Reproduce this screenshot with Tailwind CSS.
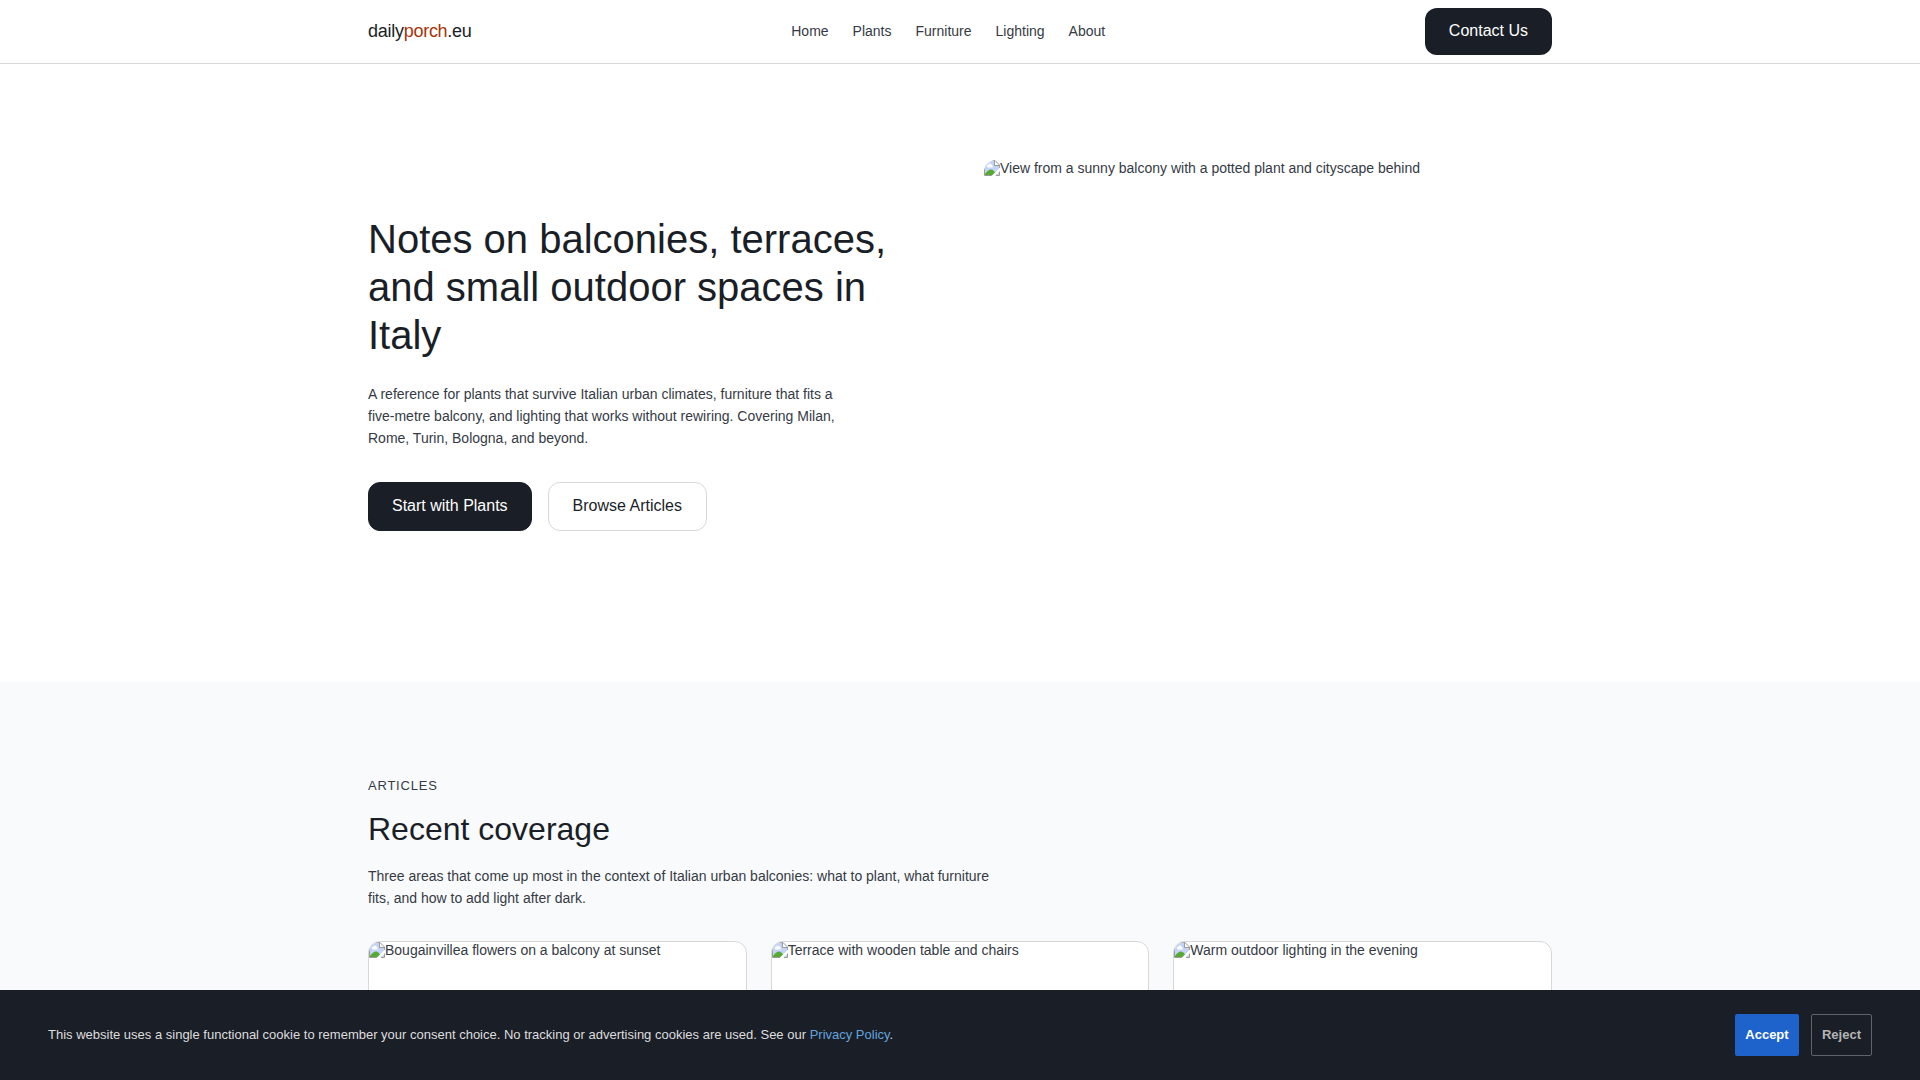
<!DOCTYPE html>
<html lang="en">
<head>
    <meta charset="UTF-8">
    <meta name="viewport" content="width=device-width, initial-scale=1.0">
    <title>dailyporch.eu</title>
    <script src="https://cdn.jsdelivr.net/npm/@tailwindcss/browser@4"></script>
</head>
<body class="bg-white font-['Liberation_Sans',Arial,sans-serif] text-sm text-[#353a45]">
    <!-- Shared placeholder icon for images -->
    <svg class="hidden" aria-hidden="true">
        <symbol id="picture" viewBox="0 0 16 16">
            <path d="M1 1h10l4 4v10H1z" fill="#c3d4f6"/>
            <path d="M3 6.500a1.600 1.600 0 0 1 1.500-2 1.900 1.900 0 0 1 3.500 1 1.200 1.200 0 0 1 .5 2H3.500z" fill="#fff"/>
            <path d="M1 15v-1c2-3 4-4.500 6-4.500 2 0 3 1.500 4 3l2.500 2.500z" fill="#57ab34"/>
            <path d="M11 1v4h4z" fill="#fff"/>
            <path d="M.5 15.500V.5H11l4.500 4.500v10.500zM10.500.5v5h5" fill="none" stroke="#9a9a9a"/>
            <path d="M7.500 16L16 7.500V11l-4.500 5z" fill="#fff"/>
        </symbol>
    </svg>

    <header class="border-b border-[#d8d8da] bg-white">
        <div class="mx-auto flex h-[63px] max-w-7xl items-center justify-between px-12">
            <a href="#" class="text-lg leading-[25px] tracking-[-0.015em] text-[#1a1e27]">daily<span class="text-[#a83208]">porch</span>.eu</a>
            <nav class="flex gap-6 leading-[19px]">
                <a href="#">Home</a>
                <a href="#plants">Plants</a>
                <a href="#furniture">Furniture</a>
                <a href="#lighting">Lighting</a>
                <a href="#about">About</a>
            </nav>
            <a href="#contact" class="rounded-xl bg-[#1a1e27] px-6 pt-3 pb-[13px] text-base leading-[22px] text-white">Contact Us</a>
        </div>
    </header>

    <main>
        <section class="mx-auto grid max-w-7xl grid-cols-2 items-center gap-12 px-12 py-24">
            <div>
                <h1 class="text-[40px] leading-12 text-[#1a1e27]">Notes on balconies, terraces, and small outdoor spaces in Italy</h1>
                <p class="mt-6 max-w-[480px] leading-[22px]">A reference for plants that survive Italian urban climates, furniture that fits a five-metre balcony, and lighting that works without rewiring. Covering Milan, Rome, Turin, Bologna, and beyond.</p>
                <div class="mt-[33px] flex gap-4">
                    <a href="#plants" class="rounded-xl border border-[#1a1e27] bg-[#1a1e27] px-[23px] pt-3 pb-[13px] text-base leading-[22px] text-white">Start with Plants</a>
                    <a href="#articles" class="rounded-xl border border-[#d8d8da] px-6 pt-3 pb-[13px] text-base leading-[22px] text-[#1a1e27]">Browse Articles</a>
                </div>
            </div>
            <div class="flex aspect-[4/3] items-start overflow-hidden rounded-xl leading-4">
                <svg class="size-4 shrink-0"><use href="#picture"/></svg>
                <span>View from a sunny balcony with a potted plant and cityscape behind</span>
            </div>
        </section>

        <section id="articles" class="bg-[#f9fafc]">
            <div class="mx-auto max-w-7xl px-12 py-24">
                <p class="text-[13px] leading-[15px] tracking-[0.06em] uppercase">Articles</p>
                <h2 class="mt-4 text-[32px] leading-10 text-[#1a1e27]">Recent coverage</h2>
                <p class="mt-4 max-w-[640px] leading-[22px]">Three areas that come up most in the context of Italian urban balconies: what to plant, what furniture fits, and how to add light after dark.</p>
                <div class="mt-8 grid grid-cols-3 gap-6">
                    <article id="plants" class="overflow-hidden rounded-xl border border-[#d8d8da] bg-white">
                        <div class="flex aspect-video items-start leading-4">
                            <svg class="size-4 shrink-0"><use href="#picture"/></svg>
                            <span>Bougainvillea flowers on a balcony at sunset</span>
                        </div>
                    </article>
                    <article id="furniture" class="overflow-hidden rounded-xl border border-[#d8d8da] bg-white">
                        <div class="flex aspect-video items-start leading-4">
                            <svg class="size-4 shrink-0"><use href="#picture"/></svg>
                            <span>Terrace with wooden table and chairs</span>
                        </div>
                    </article>
                    <article id="lighting" class="overflow-hidden rounded-xl border border-[#d8d8da] bg-white">
                        <div class="flex aspect-video items-start leading-4">
                            <svg class="size-4 shrink-0"><use href="#picture"/></svg>
                            <span>Warm outdoor lighting in the evening</span>
                        </div>
                    </article>
                </div>
            </div>
        </section>
    </main>

    <!-- Cookie banner -->
    <div id="cookie-banner" class="fixed inset-x-0 bottom-0 flex items-center justify-between gap-6 bg-[#1a1e27] px-12 py-6 text-[13px] text-[#dddddd]">
        <p>This website uses a single functional cookie to remember your consent choice. No tracking or advertising cookies are used. See our <a href="#privacy" class="text-[#63a4de]">Privacy Policy</a>.</p>
        <div class="flex gap-3">
            <button type="button" onclick="closeBanner()" class="h-[42px] min-w-16 rounded-xs bg-[#1e62cc] px-[10px] font-bold text-white">Accept</button>
            <button type="button" onclick="closeBanner()" class="h-[42px] rounded-xs border border-[#5f6269] px-[10px] font-bold text-[#b4b4b4]">Reject</button>
        </div>
    </div>

    <script>
        function closeBanner() {
            document.getElementById('cookie-banner').remove();
        }
    </script>
</body>
</html>
